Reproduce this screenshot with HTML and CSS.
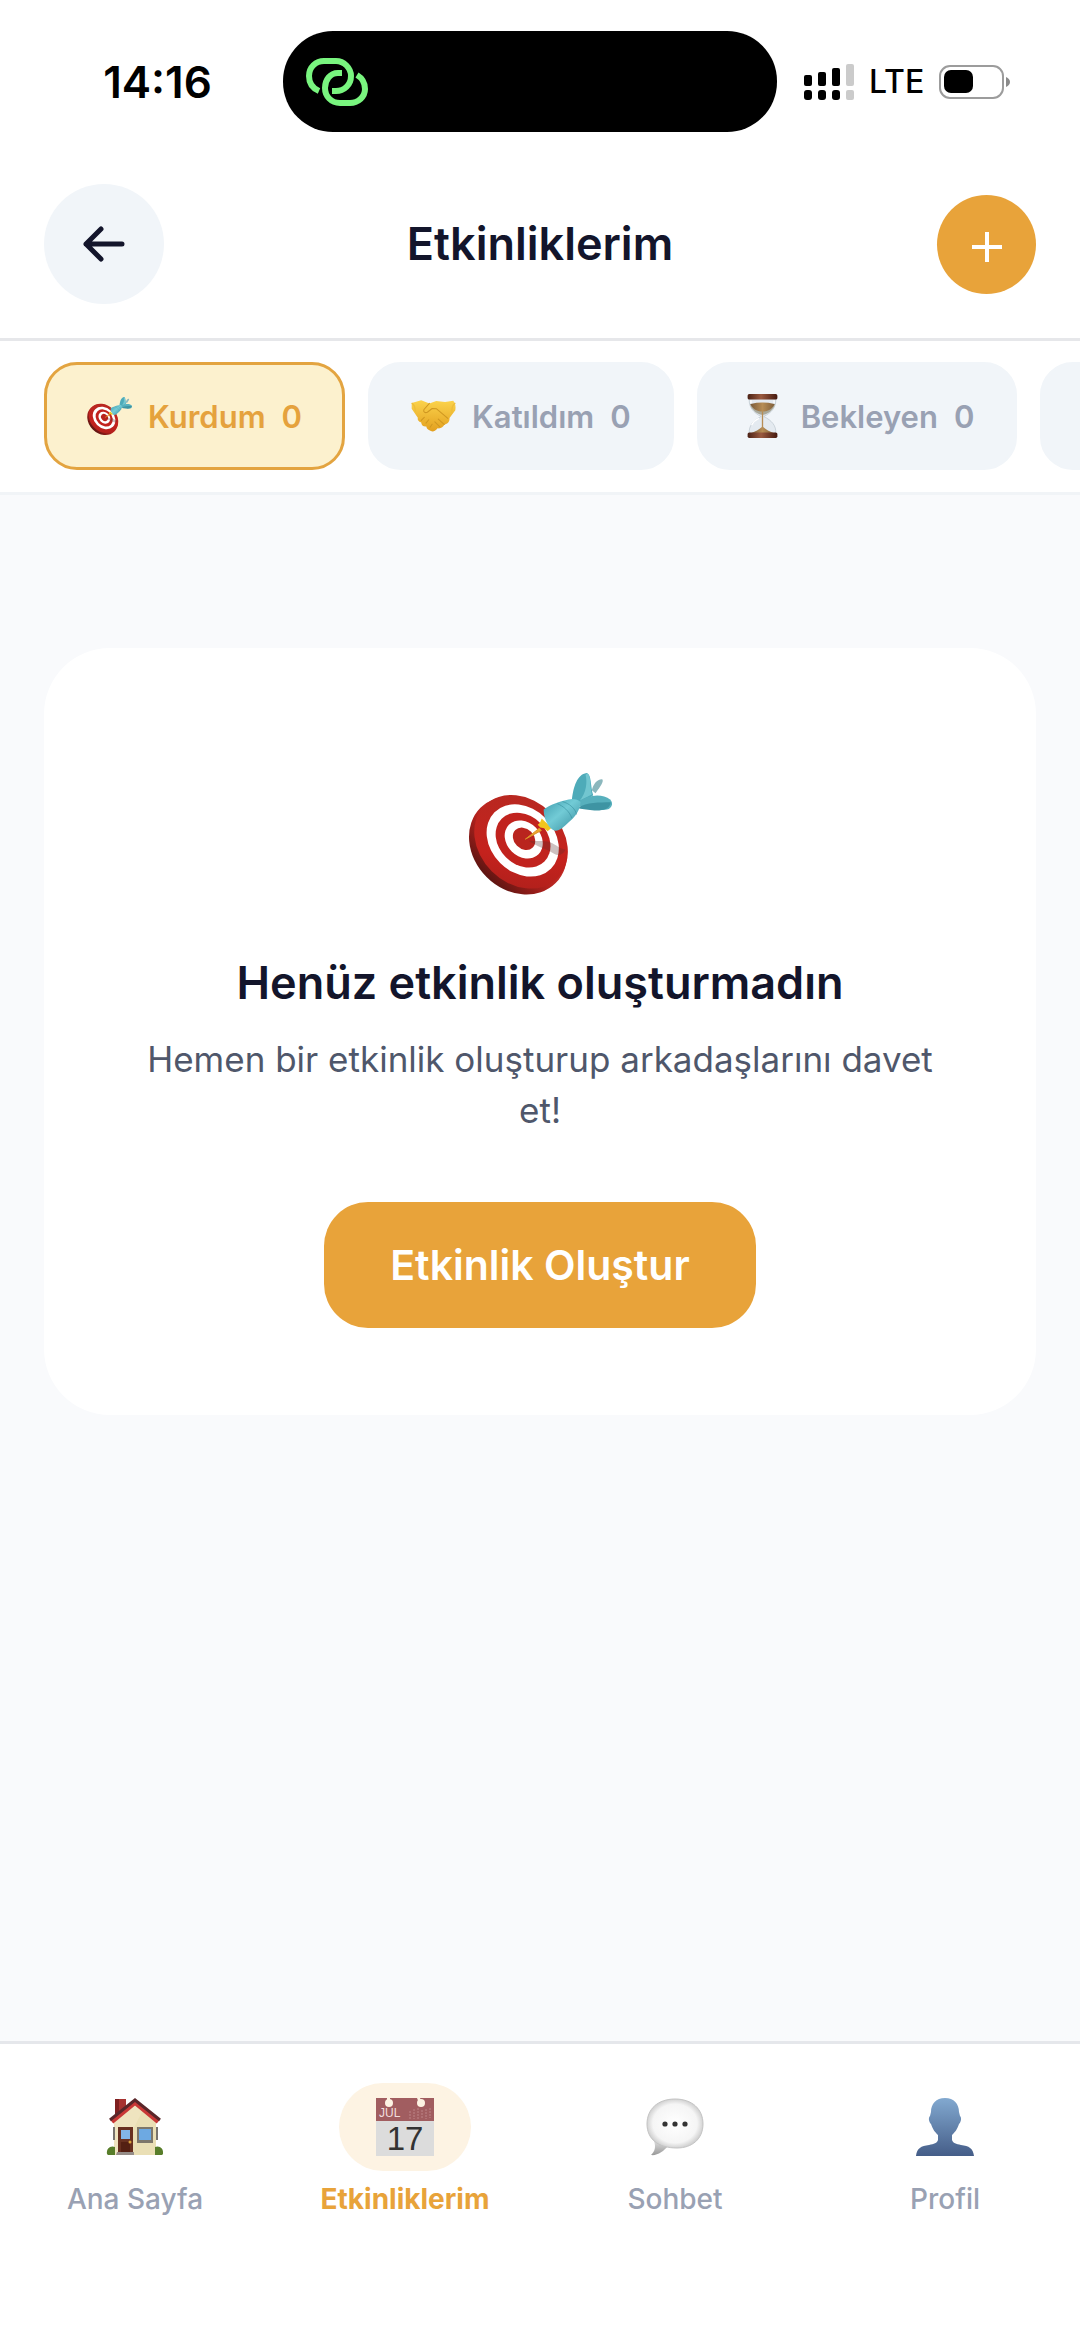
FILE: index.html
```html
<!DOCTYPE html>
<html lang="tr">
<head>
<meta charset="utf-8">
<meta name="viewport" content="width=device-width, initial-scale=1">
<title>Etkinliklerim</title>
<link rel="stylesheet" href="styles.css">
</head>
<body>
<svg class="defs" aria-hidden="true">
  <defs>
    <linearGradient id="rim" x1="0" y1="0" x2="0" y2="1"><stop offset="0" stop-color="#d8453a"/><stop offset=".6" stop-color="#b3211d"/><stop offset="1" stop-color="#5e1512"/></linearGradient>
    <linearGradient id="face" x1="0" y1="0" x2="1" y2="1"><stop offset="0" stop-color="#b42a22"/><stop offset=".6" stop-color="#c5221d"/><stop offset="1" stop-color="#a81f1b"/></linearGradient>
    <linearGradient id="barrel" x1="0" y1="0" x2="1" y2="1"><stop offset="0" stop-color="#3e9cad"/><stop offset=".45" stop-color="#72cbd6"/><stop offset="1" stop-color="#358b9c"/></linearGradient>
    <linearGradient id="skin" x1="0" y1="0" x2="0" y2="1"><stop offset="0" stop-color="#fbd34c"/><stop offset="1" stop-color="#e3a01f"/></linearGradient>
    <linearGradient id="wood" x1="0" y1="0" x2="1" y2="0"><stop offset="0" stop-color="#4b2115"/><stop offset=".45" stop-color="#9a5a40"/><stop offset="1" stop-color="#45190f"/></linearGradient>
    <linearGradient id="sand" x1="0" y1="0" x2="1" y2="0"><stop offset="0" stop-color="#7b5b3a"/><stop offset=".5" stop-color="#b78d55"/><stop offset="1" stop-color="#80603c"/></linearGradient>
    <linearGradient id="person" x1="0" y1="0" x2="0" y2="1"><stop offset="0" stop-color="#82a9d0"/><stop offset="1" stop-color="#455d88"/></linearGradient>
    <radialGradient id="bubble" cx=".5" cy=".5" r=".55"><stop offset="0" stop-color="#fff"/><stop offset=".72" stop-color="#f5f5f5"/><stop offset="1" stop-color="#c2c2c2"/></radialGradient>
    <linearGradient id="tail" x1="0" y1="0" x2="0" y2="1"><stop offset="0" stop-color="#ddd"/><stop offset="1" stop-color="#999"/></linearGradient>
    <symbol id="target" viewBox="80 98 432 367">
      <ellipse cx="230" cy="316" rx="160" ry="134" transform="rotate(45 230 316)" fill="url(#rim)"/>
      <ellipse cx="239" cy="305" rx="155" ry="125" transform="rotate(45 239 305)" fill="url(#face)"/>
      <ellipse cx="244" cy="301" rx="120" ry="96" transform="rotate(45 244 301)" fill="#fff"/>
      <ellipse cx="245" cy="300" rx="91" ry="73" transform="rotate(45 245 300)" fill="#c1231e"/>
      <ellipse cx="247" cy="298" rx="63" ry="51" transform="rotate(45 247 298)" fill="#fff"/>
      <ellipse cx="248" cy="296" rx="37" ry="30" transform="rotate(45 248 296)" fill="#b9241e"/>
      <path d="M262 302c28 2 44-2 64 4 20 8 30 20 46 22-2 12-20 22-32 14-24-16-54-22-78-40z" fill="#5b3030" opacity=".3"/>
      <path d="M301 235l13 12 17 16-12 10-10-9-12-2-8-8 7-6z" fill="#f2c51d"/>
      <path d="M252 297l42-33 6 7z" fill="#eda52b" stroke="#dc9326" stroke-width="3"/>
      <path d="M452 150c4-18 16-34 31-33 6 6-4 20-20 42z" fill="#8bb7bd"/>
      <path d="M392 180c4-40 16-78 44-82 16 4 11 39 20 67l-36 28z" fill="#4eabb9"/>
      <path d="M433 103c6 22 2 54-17 78l36-18c-6-24-2-54-13-64z" fill="#72c6d0"/>
      <path d="M412 184c32-22 72-24 95-6 10 10 6 22-4 28-24 8-66 0-87-8z" fill="#57b0bd"/>
      <path d="M408 203c32-18 64-16 101-17-1 22-30 27-56 24-18-2-32-4-45-7z" fill="#3e94a3"/>
      <path d="M307 208c20-15 52-25 75-30 14-4 28 0 36 7 0 24-18 46-34 60-16 16-30 28-42 27-17-3-35-32-35-64z" fill="url(#barrel)"/>
      <path d="M364 184c20 6 38 20 42 39M348 190c18 8 36 22 44 44" fill="none" stroke="#328999" stroke-width="3" opacity=".55"/>
    </symbol>
  </defs>
</svg>

<div class="statusbar">
  <time class="clock">14:16</time>
  <div class="island">
    <svg class="link-icon" viewBox="0 0 62 48" fill="none" stroke="#79f57f" stroke-width="6" aria-hidden="true">
      <path d="M13 33C6 30 3 24 3 18 3 9 10 3 18 3h12c8 0 15 7 15 15 0 9-7 15-15 15h-4"/>
      <path d="M36 15h-4c-8 0-13 7-13 15s6 15 15 15h10c8 0 15-6 15-14 0-6-3-11-8-14"/>
    </svg>
  </div>
  <div class="system">
    <svg class="signal" viewBox="0 0 50 36" aria-hidden="true">
      <rect y="11" width="8" height="11" rx="2"/><rect x="14" y="8" width="8" height="14" rx="2"/><rect x="28" y="4" width="8" height="18" rx="2"/>
      <rect y="26" width="8" height="10" rx="3"/><rect x="14" y="26" width="8" height="10" rx="3"/><rect x="28" y="26" width="8" height="10" rx="3"/>
      <path d="M44 0h4q2 0 2 2v18q0 2-2 2h-4q-2 0-2-2V2q0-2 2-2zM44 26h4q2 0 2 2v6q0 2-2 2h-4q-2 0-2-2v-6q0-2 2-2z" fill="#cbcbcb"/>
    </svg>
    <span>LTE</span>
    <svg class="battery" viewBox="0 0 72 34" aria-hidden="true">
      <rect x="1" y="1" width="63" height="32" rx="10" fill="none" stroke="#9c9c9c" stroke-width="2"/>
      <rect x="5" y="5" width="29" height="23" rx="7"/>
      <path d="M67 12q4 2 4 5t-4 5z" fill="#8a8a8a"/>
    </svg>
  </div>
</div>

<header class="header">
  <button class="back" type="button" aria-label="Geri">
    <svg viewBox="0 0 42 36" aria-hidden="true"><path d="M39 18H3M18 3L3 18l15 15" fill="none" stroke="#13152b" stroke-width="5" stroke-linecap="round" stroke-linejoin="round"/></svg>
  </button>
  <h1>Etkinliklerim</h1>
  <button class="add" type="button" aria-label="Ekle">
    <svg viewBox="0 0 30 36" aria-hidden="true"><path d="M15 6v30M0 21h30" stroke="#fff" stroke-width="4"/></svg>
  </button>
</header>

<div class="tabs">
  <button class="tab active" type="button">
    <svg class="tab-icon" aria-hidden="true"><use href="#target"/></svg>
    <span>Kurdum</span><span>0</span>
  </button>
  <button class="tab" type="button">
    <svg class="tab-icon" viewBox="0 0 132 94" aria-hidden="true">
      <path d="M2 9L30 1l24 9 20-7 26 3 24-4c6 6 8 18 6 28l-17 23c1 10-6 18-15 19-3 8-12 13-20 11-6 9-16 12-24 6-6-2-8-6-9-11-9 1-15-5-15-12-8-3-12-8-10-14L2 26z" fill="url(#skin)"/>
      <path d="M54 10L38 28c-3 7 3 11 10 8l14-11 13 1 33 28M30 60l9-9M44 68l8-10M56 80l6-9M80 56l18 16M70 64l14 14" fill="none" stroke="#cf9721" stroke-width="3" stroke-linecap="round" stroke-linejoin="round"/>
      <path d="M2 9Q12 14 13 35M130 9q-12 8-10 30" fill="none" stroke="#eebd39" stroke-width="4"/>
    </svg>
    <span>Katıldım</span><span>0</span>
  </button>
  <button class="tab" type="button">
    <svg class="tab-icon" viewBox="0 0 90 133" aria-hidden="true">
      <path d="M5 15h80c2 26-14 42-36 53 24 12 38 28 36 51H5c-2-23 12-39 36-51C19 57 3 41 5 15z" fill="#e4eaf0" stroke="#b9c4cc" stroke-width="2"/>
      <path d="M7 30h76C79 46 66 58 48 63h-6C24 58 11 46 7 30z" fill="#aaa99a"/>
      <path d="M9 30q36-8 72 0c-4 14-18 22-36 23C27 52 13 44 9 30z" fill="url(#sand)"/>
      <path d="M43 52h4v48c8 8 20 14 31 18H12c11-4 23-10 31-18z" fill="url(#sand)"/>
      <path d="M12 94q8-14 22-20M10 19v9M80 19v9" fill="none" stroke="#fff" stroke-width="4"/>
      <rect width="90" height="17" rx="5" fill="url(#wood)"/><rect y="116" width="90" height="17" rx="5" fill="url(#wood)"/>
    </svg>
    <span>Bekleyen</span><span>0</span>
  </button>
  <button class="tab more" type="button" aria-label="Diğer"></button>
</div>

<main class="content">
  <section class="card">
    <svg class="hero" aria-hidden="true"><use href="#target"/></svg>
    <h2>Henüz etkinlik oluşturmadın</h2>
    <p>Hemen bir etkinlik oluşturup arkadaşlarını davet et!</p>
    <button class="create" type="button">Etkinlik Oluştur</button>
  </section>
</main>

<nav class="bottom">
  <a href="#home">
    <span class="pill"><svg viewBox="0 0 58 58" aria-hidden="true">
      <path d="M9 1h11v18H9z" fill="#a73331"/><path d="M9 1h4v18H9z" fill="#7f2020"/>
      <path d="M8 24L29 5l21 19v33H8z" fill="#eadfb5"/>
      <path d="M8 24L29 5l8 7L14 57H8z" fill="#f2e8c6" opacity=".6"/>
      <path d="M6 24L29 5l23 19" fill="none" stroke="#c93836" stroke-width="4"/>
      <path d="M4 22L29 2l25 20" fill="none" stroke="#5a2629" stroke-width="3"/>
      <path d="M12 29h15v27H12z" fill="#683020"/><path d="M15 32h9v9h-9z" fill="#83b5e6"/><path d="M15 44h9v10h-9z" fill="#542013"/><circle cx="24" cy="44" r="1.500" fill="#dba33d"/>
      <path d="M31 29h16v16H31z" fill="#7d776b"/><path d="M33 31h12v11H33z" fill="#6da9e2"/>
      <path d="M7 29h2v13H7zM50 29h2v13h-2z" fill="#77736d"/>
      <path d="M1 56c-1-6 4-9 8-7v8H2zM57 56c1-6-4-9-8-7v8h7z" fill="#587d2a"/>
      <path d="M11 54h17v3H10z" fill="#968d88"/>
    </svg></span>
    <span>Ana Sayfa</span>
  </a>
  <a href="#events" class="current" aria-current="page">
    <span class="pill"><svg class="calendar" viewBox="0 0 58 58" aria-hidden="true">
      <path d="M0 0h58v58H0z" fill="#dcdcdc"/><path d="M0 0h58v23H0z" fill="#a15d60"/>
      <circle cx="13" cy="5" r="4" fill="#fdf3e3"/><circle cx="45" cy="5" r="4" fill="#fdf3e3"/><path d="M11 0h3v5h-3zM41 0h3l2 5h-3z" fill="#fdf3e3"/>
      <path d="M34 13v8M38 11v10M42 10v11M46 12v9M50 11v10M54 10v10" stroke="#bd8587" stroke-dasharray="2 1"/>
      <text x="3" y="19" class="month">JUL</text><text x="29" y="52" class="day">17</text>
    </svg></span>
    <span>Etkinliklerim</span>
  </a>
  <a href="#chat">
    <span class="pill"><svg viewBox="0 0 58 58" aria-hidden="true">
      <path d="M8 43c2 6 1 10-3 14 6 1 13-4 17-9z" fill="url(#tail)"/>
      <path d="M29 1c17 0 28 10 28 25S46 50 31 50C12 50 1 41 1 26S12 1 29 1z" fill="url(#bubble)" stroke="#c4c4c4"/>
      <circle cx="19" cy="26" r="2.600" fill="#333"/><circle cx="29" cy="26" r="2.600" fill="#333"/><circle cx="39" cy="26" r="2.600" fill="#333"/>
    </svg></span>
    <span>Sohbet</span>
  </a>
  <a href="#profile">
    <span class="pill"><svg viewBox="0 0 58 58" aria-hidden="true">
      <path d="M29 0c9 0 14 6 14 14l1 4c2 2 1 6-1 8-2 6-4 8-7 11v5c1 3 4 4 9 5 8 1 12 3 13 11H0c1-8 5-10 13-11 5-1 8-2 9-5v-5c-3-3-5-5-7-11-2-2-3-6-1-8l1-4C15 6 20 0 29 0z" fill="url(#person)"/>
    </svg></span>
    <span>Profil</span>
  </a>
</nav>
</body>
</html>
```

FILE: styles.css
```css
* { box-sizing: border-box; }

body {
  margin: 0;
  min-height: 100vh;
  display: flex;
  flex-direction: column;
  background: #f9fafc;
  color: #13152b;
  font-family: Inter, Roboto, "Liberation Sans", sans-serif;
}

button {
  border: 0;
  padding: 0;
  font: inherit;
  color: inherit;
}

svg { display: block; flex: none; }
h1, h2, p { margin: 0; }

.defs { position: absolute; width: 0; height: 0; }

/* Status bar */
.statusbar {
  display: grid;
  grid-template-columns: 283fr 494fr 303fr;
  align-items: center;
  padding: 31px 0;
  background: #fff;
  color: #000;
}

.clock {
  padding-left: 32px;
  text-align: center;
  font-size: 44px;
  font-weight: 600;
}

.island {
  display: flex;
  align-items: center;
  height: 101px;
  padding-left: 23px;
  border-radius: 50px;
  background: #000;
}

.link-icon { width: 62px; height: 48px; }

.system {
  display: flex;
  align-items: center;
  gap: 15px;
  padding-left: 27px;
  font-size: 32px;
  font-weight: 500;
}

.signal { width: 50px; height: 36px; }
.battery { width: 72px; height: 34px; }

/* Header */
.header {
  display: grid;
  grid-template-columns: 1fr auto 1fr;
  align-items: center;
  padding: 21px 44px 34px;
  border-bottom: 3px solid #e6e7ea;
  background: #fff;
}

.header h1 {
  font-size: 45px;
  font-weight: 600;
  line-height: 60px;
}

.back, .add {
  display: grid;
  place-items: center;
  border-radius: 50%;
}

.back { width: 120px; height: 120px; background: #f1f5f9; }
.back svg { width: 42px; height: 36px; }
.add { justify-self: end; width: 99px; height: 99px; background: #e8a33a; }
.add svg { width: 30px; height: 36px; }

/* Filter tabs */
.tabs {
  display: flex;
  gap: 23px;
  padding: 21px 44px 22px;
  border-bottom: 3px solid #f1f4f7;
  background: #fff;
  overflow: hidden;
}

.tab {
  display: flex;
  flex: none;
  align-items: center;
  gap: 16px;
  height: 108px;
  padding: 0 40px;
  border: 3px solid #f1f5f9;
  border-radius: 33px;
  background: #f1f5f9;
  color: #99a1b3;
  font-size: 31px;
  font-weight: 600;
}

.tab.active {
  border-color: #e3a440;
  background: #fcf1ce;
  color: #e5a23d;
}

.tab.more { width: 300px; }
.tab-icon { width: 45px; height: 44px; }

/* Empty state */
.content { flex: 1; padding: 153px 44px; }

.card {
  display: flex;
  flex-direction: column;
  align-items: center;
  padding: 125px 88px 87px;
  border-radius: 66px;
  background: #fff;
  text-align: center;
}

.hero { width: 144px; height: 122px; }

.card h2 {
  margin-top: 58px;
  font-size: 45px;
  font-weight: 600;
  line-height: 60px;
}

.card p {
  margin-top: 21px;
  color: #4f576b;
  font-size: 35px;
  line-height: 51px;
}

.create {
  height: 126px;
  margin-top: 66px;
  padding: 0 66px;
  border-radius: 44px;
  background: #e8a33a;
  color: #fff;
  font-size: 41px;
  font-weight: 600;
}

/* Bottom navigation */
.bottom {
  display: grid;
  grid-template-columns: repeat(4, 1fr);
  padding: 39px 0 125px;
  border-top: 3px solid #e5e7eb;
  background: #fff;
}

.bottom a {
  display: flex;
  flex-direction: column;
  align-items: center;
  gap: 11px;
  color: #99a1b3;
  font-size: 28px;
  font-weight: 500;
  line-height: 34px;
  text-decoration: none;
}

.bottom .current { color: #e8a33a; font-weight: 700; }

.pill {
  display: grid;
  place-items: center;
  width: 132px;
  height: 88px;
  border-radius: 44px;
}

.pill svg { width: 58px; height: 58px; overflow: visible; }
.current .pill { background: #fdf3e3; }
.calendar text { font-family: "Liberation Sans", Arial, sans-serif; font-weight: 400; }
.month { fill: #f2dede; font-size: 12px; }
.day { fill: #333; font-size: 33px; text-anchor: middle; }
```
